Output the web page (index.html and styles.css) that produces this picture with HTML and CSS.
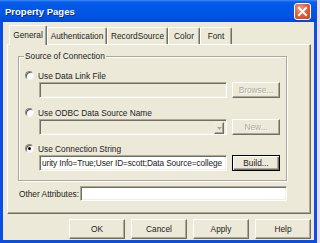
FILE: index.html
```html
<!DOCTYPE html>
<html>
<head>
<meta charset="utf-8">
<link rel="stylesheet" href="styles.css">
</head>
<body>
<div class="window">
  <div class="titlebar">
    <span class="title">Property Pages</span>
    <span class="close"><svg width="11" height="11" viewBox="0 0 11 11"><path d="M2 2 L9 9 M9 2 L2 9" stroke="#fff" stroke-width="2" stroke-linecap="square"/></svg></span>
  </div>
  <div class="body">
    <div class="tabs">
      <div class="tab sel w-gen">General</div>
      <div class="tab w-auth">Authentication</div>
      <div class="tab w-rec">RecordSource</div>
      <div class="tab w-col">Color</div>
      <div class="tab w-font">Font</div>
    </div>
    <div class="panel">
      <div class="group">
        <span class="legend">Source of Connection</span>
        <div class="opt first"><span class="radio"></span>Use Data Link File</div>
        <div class="row">
          <div class="field disabled"></div>
          <div class="btn dis">Browse...</div>
        </div>
        <div class="opt second"><span class="radio"></span>Use ODBC Data Source Name</div>
        <div class="row">
          <div class="field disabled combo"><span class="drop"><svg width="5" height="3" viewBox="0 0 5 3"><path d="M0 0 H5 L2.5 3 Z" fill="#aca899"/></svg></span></div>
          <div class="btn dis">New...</div>
        </div>
        <div class="opt third"><span class="radio on"></span>Use Connection String</div>
        <div class="row">
          <div class="field text">urity Info=True;User ID=scott;Data Source=college</div>
          <div class="btn def">Build...</div>
        </div>
      </div>
      <div class="other">
        <span class="olabel">Other Attributes:</span>
        <div class="field wide"></div>
      </div>
    </div>
    <div class="buttons">
      <div class="btn big">OK</div>
      <div class="btn big">Cancel</div>
      <div class="btn big">Apply</div>
      <div class="btn big">Help</div>
    </div>
  </div>
</div>
</body>
</html>
```
FILE: styles.css
```css
* { box-sizing: border-box; margin: 0; padding: 0; }
body {
  margin: 0;
  width: 320px;
  height: 243px;
  overflow: hidden;
  background: #efdcef;
  font-family: "Liberation Sans", Arial, sans-serif;
  font-size: 8.3px;
  color: #222;
}
.window {
  width: 317px;
  height: 243px;
  display: flex;
  flex-direction: column;
}
.titlebar {
  height: 22px;
  flex: none;
  background: linear-gradient(#3b8cf8 0, #0a5ce8 2px, #0058e6 8px, #0055e4 15px, #0049d6 22px);
  display: flex;
  align-items: center;
  justify-content: space-between;
  padding: 0 6px 0 5px;
}
.title {
  color: #fff;
  font-weight: bold;
  font-size: 9.5px;
  text-shadow: 1px 1px #0d2a9a;
}
.close {
  width: 17px;
  height: 17px;
  border: 1px solid #fff;
  border-radius: 3px;
  background: radial-gradient(circle at 35% 30%, #f0a080 0, #e2623c 45%, #c9401c 100%);
  display: flex;
  align-items: center;
  justify-content: center;
}
.body {
  flex: 1;
  background: #ece9d8;
  border: 3px solid #0b4ee3;
  border-top: none;
  display: flex;
  flex-direction: column;
  padding: 3px 3px 0 4px;
}
.tabs {
  display: flex;
  align-items: flex-end;
  height: 19px;
  margin-left: 2px;
  position: relative;
  z-index: 1;
}
.tab {
  height: 17px;
  display: flex;
  align-items: center;
  justify-content: center;
  border-top: 1px solid #fff;
  border-left: 1px solid #fff;
  border-right: 1px solid #716f64;
  box-shadow: inset -1px 0 #aca899;
  border-radius: 2px 2px 0 0;
  background: #ece9d8;
}
.tab.sel {
  height: 20px;
  margin-bottom: -1px;
  padding-bottom: 2px;
}
.w-gen { width: 38px; }
.w-auth { width: 60px; }
.w-rec { width: 61px; }
.w-col { width: 32px; }
.w-font { width: 32px; }
.panel {
  width: 304px;
  height: 170px;
  flex: none;
  border: 1px solid;
  border-color: #fff #716f64 #716f64 #fff;
  box-shadow: inset -1px -1px #aca899;
  display: flex;
  flex-direction: column;
}
.group {
  margin: 11px 0 0 10px;
  width: 269px;
  height: 125px;
  border: 1px solid #aca899;
  box-shadow: inset 1px 1px #fff, 1px 1px #fff;
  display: flex;
  flex-direction: column;
}
.legend {
  align-self: flex-start;
  margin: -6px 0 0 5px;
  padding: 0 1px;
  line-height: 10px;
  background: #ece9d8;
}
.opt {
  display: flex;
  align-items: center;
  height: 11px;
  margin-left: 6px;
}
.opt.first { margin-top: 9px; }
.opt.second { margin-top: 9px; }
.opt.third { margin-top: 8px; }
.radio {
  width: 9px;
  height: 9px;
  margin-right: 4px;
  border-radius: 50%;
  background: #fff;
  border: 1px solid;
  border-color: #8e8b7c #f4f3ee #f4f3ee #8e8b7c;
  box-shadow: inset 1px 1px #5c5a50;
  display: flex;
  align-items: center;
  justify-content: center;
}
.radio.on::after {
  content: "";
  width: 3px;
  height: 3px;
  border-radius: 50%;
  background: #000;
}
.row {
  display: flex;
  gap: 5px;
  height: 16px;
  margin: 1px 0 0 20px;
}
.field {
  width: 188px;
  height: 16px;
  border: 1px solid;
  border-color: #aca899 #fff #fff #aca899;
  box-shadow: inset 1px 1px #716f64, inset -1px -1px #f1efe2;
  background: #fff;
}
.field.disabled { background: #ece9d8; }
.field.combo {
  display: flex;
  justify-content: flex-end;
  padding: 2px;
}
.drop {
  width: 10px;
  height: 12px;
  border: 1px solid;
  border-color: #f1efe2 #716f64 #716f64 #f1efe2;
  box-shadow: inset -1px -1px #aca899;
  display: flex;
  align-items: center;
  justify-content: center;
  background: #ece9d8;
}
.field.text {
  display: flex;
  align-items: center;
  padding-left: 2px;
  white-space: nowrap;
  overflow: hidden;
  letter-spacing: -0.12px;
}
.btn {
  width: 48px;
  height: 16px;
  display: flex;
  align-items: center;
  justify-content: center;
  border: 1px solid;
  border-color: #fff #716f64 #716f64 #fff;
  box-shadow: inset -1px -1px #aca899;
  background: #ece9d8;
}
.btn.dis { color: #aca899; text-shadow: 1px 1px #fff; }
.btn.def {
  border: 1px solid #000;
  box-shadow: inset 1px 1px #fff, inset -1px -1px #716f64, inset -2px -2px #aca899;
}
.other {
  display: flex;
  align-items: center;
  height: 15px;
  margin: 5px 0 0 11px;
}
.olabel { width: 61px; white-space: nowrap; }
.field.wide { width: 207px; height: 15px; }
.buttons {
  display: flex;
  justify-content: flex-end;
  gap: 6px;
  margin-top: 5px;
  height: 20px;
}
.btn.big { width: 56px; height: 20px; }
```
